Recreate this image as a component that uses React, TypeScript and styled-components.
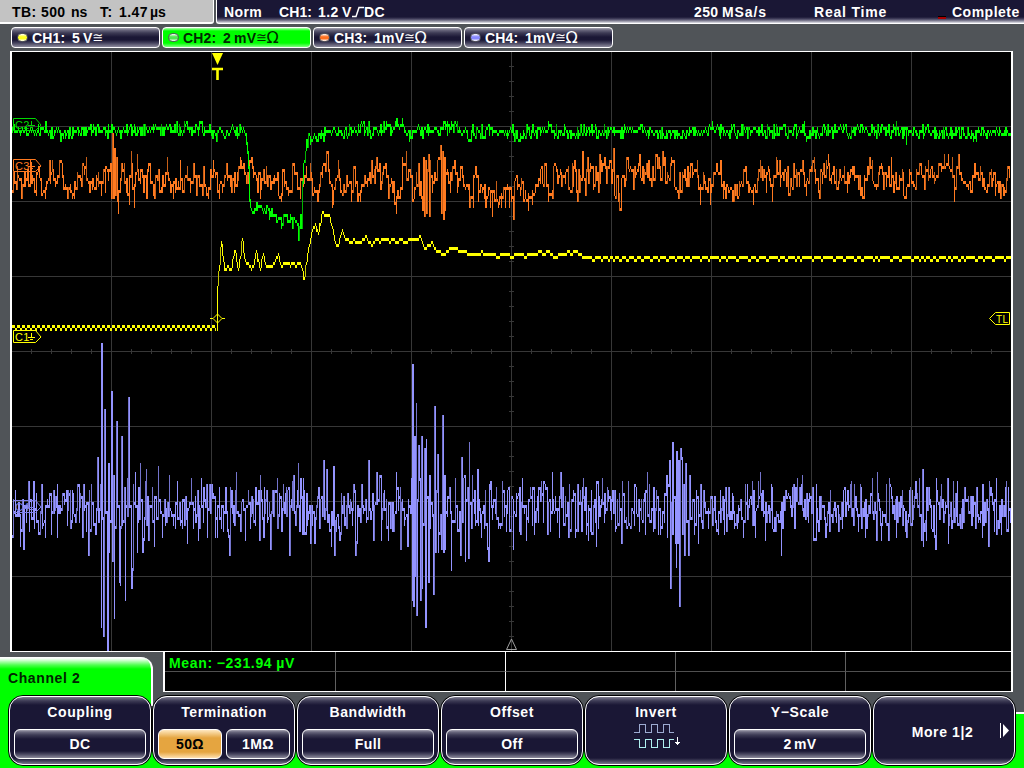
import { Fragment } from 'react';
import styled, { createGlobalStyle, css } from 'styled-components';

const GlobalStyle = createGlobalStyle`
  * {
    box-sizing: border-box;
  }

  body {
    margin: 0;
    background: #505458;
    font-family: 'Liberation Sans', Arial, sans-serif;
    font-size: 14px;
    font-weight: 700;
    color: #fff;
    overflow: hidden;
  }
`;

const navy = '#1a1735';

const glossy = css`
  background: linear-gradient(
    to bottom,
    #a8a6b4 0,
    #6a687e 2px,
    #3c3a54 5px,
    ${navy} 9px,
    ${navy} calc(100% - 7px),
    #45435d calc(100% - 4px),
    #8d8b9d 100%
  );
`;

const Page = styled.div`
  display: flex;
  flex-direction: column;
  width: 1024px;
  height: 768px;
  background: #505458;
`;

const TopBar = styled.header`
  display: flex;
  gap: 2px;
  height: 24px;
`;

const TimeBase = styled.div`
  display: flex;
  align-items: center;
  width: 214px;
  padding-left: 12px;
  color: #000;
  background: #c3c3c3;
  border-right: 1px solid #fff;
  border-bottom: 2px solid #fff;
  border-bottom-right-radius: 3px;
  padding-top: 2px;
`;

const Status = styled.div`
  display: flex;
  align-items: center;
  flex: 1;
  padding-left: 7px;
  border-left: 1px solid #fff;
  border-bottom: 1px solid #fff;
  border-bottom-left-radius: 3px;
  background: linear-gradient(${navy} 17px, #45425f 19px, #8b899c 21px, #e4e4ea 23px);
  padding-top: 1px;
`;

const Token = styled.span<{ $w?: number; $ls?: number }>`
  flex: none;
  width: ${({ $w }) => ($w ? `${$w}px` : 'auto')};
  letter-spacing: ${({ $ls = 0.4 }) => $ls}px;
  white-space: nowrap;
`;

const Busy = styled.i`
  width: 8px;
  height: 3px;
  margin: 11px 6px 0 0;
  border-bottom: 2px solid #a80000;
  background: #000;
`;

const Channels = styled.div`
  display: flex;
  gap: 2px;
  height: 27px;
  padding: 3px 0 0 11px;
`;

const ChannelTab = styled.div<{ $active?: boolean }>`
  display: flex;
  align-items: center;
  width: 149px;
  height: 21px;
  padding-left: 5px;
  border: 1px solid #fff;
  border-radius: 4px;
  ${glossy}
  ${({ $active }) =>
    $active &&
    css`
      color: #002800;
      background: linear-gradient(#b0ffb0 0, #0f0 3px, #0f0 15px, #80ff80 19px);
    `}
`;

const Led = styled.i<{ $color: string }>`
  width: 11px;
  height: 9px;
  margin-right: 4px;
  border: 1px solid #55555c;
  border-radius: 5px;
  background: linear-gradient(#fff, ${({ $color }) => $color} 40%, ${({ $color }) => $color} 65%, #fff);
`;

const Coupling = styled.span<{ $size: number }>`
  font-family: 'DejaVu Sans', sans-serif;
  font-size: ${({ $size }) => $size}px;
  line-height: 16px;
  font-weight: 400;
  letter-spacing: -0.7px;
`;

const Screen = styled.main`
  width: 1003px;
  height: 601px;
  margin-left: 10px;
  border: solid #fff;
  border-width: 1px 2px;
  background: #000;

  svg {
    display: block;
  }
`;

const Lower = styled.div`
  display: flex;
  height: 40px;
`;

const MenuTab = styled.div`
  display: flex;
  align-items: center;
  width: 153px;
  height: 35px;
  margin: 5px 10px 0 0;
  padding: 7px 0 0 8px;
  color: #002400;
  background: linear-gradient(#fff 1px, #d8ffd8 3px, #50ff50 8px, #0f0 12px);
  border-right: 2px solid #fff;
  border-top-right-radius: 12px;
`;

const Measurements = styled.div`
  display: grid;
  grid-template-columns: 171px 170px 170px 170px 1fr;
  grid-template-rows: 20px 19px;
  width: 850px;
  height: 40px;
  border: solid #fff;
  border-width: 0 2px 1px;
  background: #000;
`;

const Cell = styled.div<{ $bright?: boolean; $top?: boolean; $last?: boolean }>`
  padding-left: 4px;
  line-height: 22px;
  color: #0f0;
  white-space: pre;
  letter-spacing: 0.65px;
  word-spacing: -0.5px;
  border-right: ${({ $bright, $last }) =>
    $last ? 'none' : `1px solid ${$bright ? '#fff' : '#606060'}`};
  border-bottom: ${({ $top }) => ($top ? '1px solid #505050' : 'none')};
`;

const Menu = styled.nav`
  display: flex;
  height: 76px;
  padding: 3px 8px 0;
  background:
    linear-gradient(#fff, #fff) 151px 0 / 2px 14px no-repeat,
    linear-gradient(#0f0, #0f0) 0 0 / 151px 100% no-repeat,
    linear-gradient(#505458, #505458) 153px 0 / 850px 50px no-repeat,
    linear-gradient(transparent 20px, #fff 20px, #fff 22px, #0f0 22px);
`;

const MenuButton = styled.div<{ $center?: boolean }>`
  position: relative;
  display: flex;
  flex-direction: column;
  justify-content: ${({ $center }) => ($center ? 'center' : 'flex-start')};
  width: 144px;
  height: 71px;
  padding: ${({ $center }) => ($center ? '2px 0 0' : '7px 4px 0')};
  border: 1px solid #000;
  border-radius: 15px;
  text-align: center;
  ${glossy}

  &::before {
    content: '';
    position: absolute;
    inset: 0;
    border: 1px solid #fff;
    border-radius: 14px;
  }
`;

const Title = styled.div`
  height: 26px;
  line-height: 18px;
  letter-spacing: 0.6px;
`;

const Values = styled.div`
  display: flex;
  gap: 4px;
  padding: 0 1px;
`;

const Value = styled.div<{ $selected?: boolean }>`
  flex: 1;
  height: 30px;
  line-height: 28px;
  border: 1px solid #fff;
  border-radius: 6px;
  letter-spacing: 0.4px;
  word-spacing: -2px;
  ${glossy}
  ${({ $selected }) =>
    $selected &&
    css`
      color: #000;
      background: linear-gradient(#ffe8c0 0, #e5a540 8px, #e5a540 22px, #ffe0b0 100%);
    `}
`;

const More = styled.div`
  padding-right: 3px;
  letter-spacing: 0.6px;
`;

const MoreArrow = styled.svg`
  position: absolute;
  right: 5px;
  top: 26px;
`;

const Icon = styled.svg`
  display: block;
  margin: -6px 0 0 45px;
`;

type Point = [number, number];

const pts = (source: string): Point[] =>
  source
    .trim()
    .split(/\s+/)
    .map((pair) => pair.split(',').map(Number) as Point);

const random = (seed: number) => () => {
  seed = (seed * 1664525 + 1013904223) >>> 0;
  return seed / 4294967296;
};

// noise samples over an interval of the trace
const noise = (from: number, to: number, centre: number, amp: number, step: number, seed: number) => {
  const rnd = random(seed);
  const result: Point[] = [];
  let slow = 0;
  for (let x = from; x < to; x += step * (0.7 + rnd() * 0.6)) {
    const v = rnd() + rnd() + rnd() - 1.5;
    slow = slow * 0.8 + v * 0.3;
    result.push([x, centre + (v * 0.9 + slow * 0.4) * amp]);
  }
  return result;
};

// keep the peaks and put noise samples between them; pull = 0 follows the peaks, 1 the centre
const fill = (keys: Point[], centre: number, pull: number, amp: number, step: number, seed: number) => {
  const rnd = random(seed);
  const result: Point[] = [];
  keys.forEach(([x0, y0], i) => {
    result.push([x0, y0]);
    const next = keys[i + 1];
    if (!next) return;
    for (let x = x0 + step; x < next[0] - step * 0.5; x += step) {
      const line = y0 + ((next[1] - y0) * (x - x0)) / (next[0] - x0);
      const v = rnd() + rnd() - 1;
      result.push([x, line * (1 - pull) + centre * pull + v * amp]);
    }
  });
  return result;
};

const level = (y: number) => Math.round((y - 1) / 3) * 3 + 1;

// one vertical run per pixel column, 3px vertical resolution
const columns = (points: Point[], smooth: boolean) => {
  let bright = '';
  let dim = '';
  let i = 0;
  let last = level(points[0][1]);
  const from = Math.floor(points[0][0]);
  const to = Math.min(1011, Math.ceil(points[points.length - 1][0]) + 1);
  for (let x = from; x < to; x += 1) {
    const samples: number[] = [];
    while (i < points.length && points[i][0] < x + 1) {
      samples.push(level(points[i][1]));
      i += 1;
    }
    if (!samples.length && smooth && i > 0 && i < points.length) {
      const [x0, y0] = points[i - 1];
      const [x1, y1] = points[i];
      samples.push(level(y0 + ((y1 - y0) * (x + 0.5 - x0)) / (x1 - x0)));
    }
    if (!samples.length) samples.push(last);
    let top = Math.min(...samples);
    let bottom = Math.max(...samples);
    const overlap = smooth ? 3 : 0;
    if (last < top - 3) top = last + overlap;
    if (last > bottom + 3) bottom = last - overlap;
    const rising = samples[0] < last;
    last = samples[samples.length - 1];
    const run = `M${x + 0.5} ${Math.max(52, top)}V${Math.min(651, bottom + 3)}`;
    if (bottom - top > 8 && rising && x % 3) dim += run;
    else bright += run;
  }
  return { bright, dim };
};

const green = [
  ...fill(pts('12,130 44,130 45,120 46,131 71,137 72,130 201,122 202,130 216,140 217,129 243,128'), 130, 0.7, 7, 0.9, 12),
  ...pts('244,129 245,133 246,142 247,150 248,165 249,200'),
  ...fill(pts('250,205 254,211 260,205 268,209 269,217 270,212 275,213 281,226 283,216 290,219 297,222'), 215, 0, 7.5, 0.95, 5),
  ...pts('298,237 299,225 300,214 301,225 302,180 303,162 304,160 305,150'),
  ...fill(pts('306,149 310,142 316,140 320,133 325,134 330,131 341,134 368,122 369,130 402,119 404,130 409,138 412,130 457,122 459,131 470,140 471,130'), 130, 0.5, 7.5, 0.9, 6),
  ...fill(pts('472,131 520,138 548,122 560,130 700,132 712,122 750,130 804,122 806,140 809,130 896,122 906,141 908,130 976,140 978,131 1011,131'), 130.5, 0.8, 7.5, 0.9, 8),
];

const orange = [
  ...fill(
    pts(`12,189 13,180 16,187 17,166 21,192 24,173 25,183 30,160 36,192 38,170 43,189 45,195 48,177 49,160
    50,180 52,160 55,183 59,170 62,163 65,183 67,195 70,183 72,195 74,195 77,173 80,176 84,172 86,157 88,181
    92,186 96,176 98,173 101,192 103,176 105,189 107,170 108,178 110,163 111,195 112,133 113,195 114,148
    115,192 116,157 117,198 118,210 120,178 124,164 126,189 129,201 131,151 134,204 137,154 140,182 142,170
    146,195 147,172 150,175 153,192 157,175 161,186 165,175 167,157 170,180 173,195 175,189 178,180 180,160
    182,184 184,183 187,166 190,189 193,171 196,184 199,184 202,192 203,166 206,188 208,195 210,177 213,160
    215,175 217,183 219,196 222,189 226,172 230,183 234,189 237,173 240,157 243,165 246,175 251,160 256,175
    260,195 263,172 266,165 270,182 273,178 277,173 278,183 281,198 284,178 288,193 292,175 296,172 297,186
    300,195 302,177 304,180 306,165 309,178 310,163 314,187 317,198 322,175 325,163 328,163 331,185 332,204
    337,175 338,160 342,192 346,175 351,198 353,176 355,176 360,198 364,175 367,183 369,177 374,170 379,163
    380,187 385,167 388,189 391,178 396,210 400,195 402,157 404,162 406,151 408,178 410,175 412,186 414,196
    416,171 418,164 419,192 420,180 421,195 422,207 423,157 424,213 425,160 426,210 427,170 428,154 429,213
    430,160 432,191 434,180 437,166 440,145 441,210 442,150 443,216 444,158 445,207 447,170 450,190 454,160
    457,190 460,178 462,167 465,188 468,187 473,204 475,172 478,198 482,189 484,195 488,192 490,205 492,213
    496,181 498,205 501,204 505,205 507,185 509,204 511,198 513,216 514,180 520,192 525,189 528,207 532,201
    535,190 540,181 546,172 548,198 552,190 556,166 560,170 565,180 568,165 570,190`),
    178, 0.25, 16, 0.95, 31,
  ),
  ...noise(572, 600, 173, 21, 1.05, 15),
  ...noise(600, 690, 176, 24, 1.05, 16),
  ...fill(
    pts(`690,176 692,163 697,160 700,201 703,172 707,188 710,201 713,173 716,170 720,160 721,178 723,195 728,189
    732,198 739,193 745,170 748,190 753,201 757,177 760,160 766,190 768,166 772,198 776,157 779,160 780,183
    786,173 790,184 796,170 799,184 802,160 806,192 811,166 814,157 818,189 822,180 826,160 828,154 831,180
    836,168 838,182 844,167 847,189 852,166 858,187 864,189 867,170 872,160 876,185 881,163 886,185 891,157
    893,190 899,187 902,170 906,188 909,170 913,185 919,166 924,184 928,160 934,172 938,170 944,154 948,154
    952,157 954,198 958,160 963,180 968,187 974,176 980,166 986,189 991,170 995,192 1003,190 1009,176`),
    177, 0.35, 15, 0.95, 32,
  ),
];

const square: Point[] = [];
for (let x = 12; x < 216; x += 5) {
  square.push([x, 325], [x + 3, 328]);
}

const tail: Point[] = [];
const tailRandom = random(41);
for (let x = 588; x < 1009; ) {
  const high = 3 + Math.floor(tailRandom() * (x < 690 ? 4 : 8));
  tail.push([x, 256], [x + high, 259]);
  x += high + 2 + Math.floor(tailRandom() * 2);
}
tail.push([1010, 256]);

const edge = pts(`217,328 217.3,285 218,271 219,266 221,241 223,258 224,268 228,266 231,269 233,255 235,250
  238,268 240,255 242,238 245,260 248,262 251,267 253,265 256,250 258,260 260,267 263,253 265,262 268,265
  272,266 274,262 278,254 281,265 284,262 288,261 290,264 293,261 296,264 300,261 302,268 304,278 306,262
  309,245 312,230 315,224 318,231 320,222 322,212 329,214 332,226 335,240 338,245 342,230 346,238 348,237
  350,242 354,239 357,242 360,241 366,236 370,242 372,244 376,238 380,240 385,237 390,240 394,238 397,241
  401,238 405,241 410,238 414,238 420,236 425,247 432,242 438,251 445,252 450,247 456,246 460,250 465,249
  470,254 473,252 477,253 482,251 488,253 493,252 498,256 503,252 507,253 513,256 514,252 520,252 526,256
  529,252 535,253 540,250 544,253 548,249 551,253 556,256 559,253 565,253 568,250 572,253 575,249 580,253
  584,256 587,256`);

const violet = [
  ...fill(
    pts(`12,534 13,500 15,490 17,510 20,543 22,500 23,547 24,510 26,520 28,481 29,529 31,500 33,481
    34,525 36,492 38,520 40,510 41,484 42,525 45,535 47,500 49,505 51,532 54,510 57,484 57,535 60,505 66,490
    67,522 70,490 73,492 77,493 79,520 82,535 83,487 86,530 88,552 89,490 91,484 93,515 95,532 96,510 97.5,457
    98.5,520 100,484 101,625 101.5,343 103,634 104,409 105,495 107,651 108,463 109,550 111,391 112,559 113,475
    114,616 116,421 117,495 119,580 120,583 121.5,436 123,520 124,487 125,598 127,478 127.8,515 128.5,397 129,478
    131,586 132,568 133,484 135,472 137,550 140,463 142,549 143,549 146,469 148.5,538 150,505 152,487 154,543
    156,510 158,466 160,500 162,535 164,500 165,522 169,475 171,510 173,524 175,525 177,481 179,510 182,525 184,498
    187,541 189,505 191,478 193,525 195,495 198,538 201,478 203,520 206,484 207,535 209,500 213,493 215,535
    217,535 219,487 221,525 223,528 225,500 229,552 230,487 233,520 236,472 238,510 240,524 243,500 245,538
    248,490 250,525 253,500 255,522 258,490 259,538`),
    508, 0.8, 28, 0.85, 51,
  ),
  ...noise(260, 380, 509, 37, 0.85, 21),
  ...fill(
    pts(`381,538 384,490 386,500 388,538 391,502 392,528 396,472 398,508 400,487 400.5,546 402,500
    404,522 407,543 408,499 410,510 411,478 412,598 412.5,364 413,604 414,436 415,574 416,403 416.5,613 418,445
    419,478 420,598 421,436 422,586 424,448 425,625 426,439 428,580 429,475 430,525 432,514 433,592 434,406
    435,550 436,490 437,454 438,550 440,514 441,547 442,415 443,550 444,475 445,546 447,515 449,487 450,510
    451,568 453,520 455,478 457,518 459,510 460,552 461,457 462,520 463,478 464,475 465,559 467,487 468,556
    469,442 471,525 472,475 474,510 477,469 478,522 481,534 485,490 487,547 488,559 489,484 492,517 496,487
    498,525 500,525 502,481 504,515 506,529 509,505 511,520 513,547 512,499 516,495 519,528 522,478 524,510
    526,538 528,520 530,487 532,524 534,531 537,495 538,520 541,481 543,519 545,484 547,519 550,528 552,472
    555,495 557,520 559,535 560.5,472 563,515 565,495 568,535 569,484 571,510 573,490 575,535 577,484 578,528
    580,490 583,478 586,532 588,538 591,490 593,510 596,543 596,481 598,525 602,478 604,520 608,490 611,518
    615,530 617,500 619,493 621,541 622,481 624,520 626,518 628,481 630,525 634,522 636,487 639,528 641,500
    645,532 647,472 649,484 651,510 653,530 656,490 658,532 660,532 662,525 664,520 666,475 667,535 669,460
    670,586 671,502 672,532 672.5,442 673,532 675,541 676,564 676.5,451 677,540 678,460 679,604 680,448 681,457
    682,532 683,484 684,552 685,463 686,510 688,552 689,475 690,493 692,510 694,532 696,490 698,541 700,484
    708,525 718,532 720,490 724,532 733,496 737,525 743,534 745,484 747,484 752,481 755,534 758,481 760,472
    765,537 771,484 775,530 781,552 786,490 792,487 797,478 802,475 808,520 815,537 816,484 826,534 830,490
    836,520 842,525 851,481 854,484 858,528 861,487 865,534 872,478 876,537 877,472 881,537 888,538 889,478
    891,487 896,534 902,490 905,528 912,490 919,478 921,538 922,469 923,543 926,537 930,500 935,546 936,478
    941,484 947,478 948,540 953,481 957,481 962,527 968,495 975,520 982,534 988,543 989,481 996,478 1001,531
    1008,487 1010,520`),
    508, 0.9, 30, 0.85, 52,
  ),
];

type TraceProps = { points: Point[]; color: string; dim: string; smooth?: boolean };

const Trace = ({ points, color, dim, smooth = false }: TraceProps) => {
  const path = columns(points, smooth);
  return (
    <>
      <path d={path.bright} stroke={color} />
      <path d={path.dim} stroke={dim} />
    </>
  );
};

const FlagText = styled.text<{ $small?: boolean }>`
  font-size: ${({ $small }) => ($small ? 10 : 11)}px;
  font-weight: 400;
  letter-spacing: 0.4px;
`;

const Flag = ({ y, label, color }: { y: number; label: string; color: string }) => (
  <g stroke={color} fill='none'>
    <path d={`M13.5 ${y - 6.5}H35.5L41 ${y}L35.5 ${y + 5.5}H13.5Z`} />
    <FlagText x={15} y={y + 3.5} fill={color} stroke='none'>
      {label}
    </FlagText>
    <path d={`M31.5 ${y - 4}V${y + 1}M28 ${y + 0.5}H35M30 ${y + 2.5}H33`} />
  </g>
);

const verticals = [111, 211, 311, 411, 511, 611, 711, 811, 911];
const horizontals = [126, 201, 276, 351, 426, 501, 576];

const Graticule = () => {
  let ticks = '';
  for (let x = 31; x < 1011; x += 20) ticks += `M${x + 0.5} 349V354`;
  for (let y = 66; y < 651; y += 15) ticks += `M509 ${y + 0.5}H514`;
  return (
    <path
      stroke='#373737'
      d={
        verticals.map((x) => `M${x + 0.5} 52V651`).join('') +
        horizontals.map((y) => `M12 ${y + 0.5}H1011`).join('') +
        ticks
      }
    />
  );
};

const channels = [
  { name: 'CH1:', value: '5', unit: 'V', color: '#ffff20' },
  { name: 'CH2:', value: '2', unit: 'mV', ohm: true, color: '#50e850', active: true },
  { name: 'CH3:', value: '1', unit: 'mV', ohm: true, color: '#ff7020' },
  { name: 'CH4:', value: '1', unit: 'mV', ohm: true, color: '#8888ff' },
];

const menu = [
  { title: 'Coupling', values: ['DC'] },
  { title: 'Termination', values: ['50Ω', '1MΩ'], selected: 0 },
  { title: 'Bandwidth', values: ['Full'] },
  { title: 'Offset', values: ['Off'] },
  { title: 'Invert', values: [] },
  { title: 'Y−Scale', values: ['2 mV'] },
];

const InvertIcon = () => (
  <Icon width='48' height='30' fill='none' shapeRendering='crispEdges'>
    <path stroke='#9dabd2' d='M0 9.5H5.5V1.5H11.5V9.5H17.5V1.5H23.5V9.5H29.5V1.5H35.5V9.5H40' />
    <path stroke='#b0f0f0' d='M0 16.5H5.5V24.5H11.5V16.5H17.5V24.5H23.5V16.5H29.5V24.5H35.5V16.5H40' />
    <path stroke='#fff' d='M43.5 14V22M41 19.5H46M42 20.5H45' />
  </Icon>
);

export default function App() {
  return (
    <Page>
      <GlobalStyle />
      <TopBar>
        <TimeBase>
          <Token $w={29}>TB:</Token>
          <Token $w={30}>500</Token>
          <Token $w={29} $ls={0}>ns</Token>
          <Token $w={19}>T:</Token>
          <Token $w={31}>1.47</Token>
          <Token $ls={0}>µs</Token>
        </TimeBase>
        <Status>
          <Token $w={55}>Norm</Token>
          <Token $w={39} $ls={0.1}>CH1:</Token>
          <Token $w={24}>1.2</Token>
          <Token $w={10}>V</Token>
          <svg width='12' height='12' fill='none' stroke='#fff' strokeWidth='1.5'>
            <path d='M0 10.5H4L7 1.5H12' />
          </svg>
          <Token $w={330}>DC</Token>
          <Token $w={28}>250</Token>
          <Token $w={92} $ls={0.9}>MSa/s</Token>
          <Token $w={124} $ls={0.8}>Real Time</Token>
          <Busy />
          <Token $ls={0.5}>Complete</Token>
        </Status>
      </TopBar>

      <Channels>
        {channels.map((ch) => (
          <ChannelTab key={ch.name} $active={ch.active}>
            <Led $color={ch.color} />
            <Token $w={40} $ls={0.2}>{ch.name}</Token>
            <Token $w={ch.value === '1' ? 8 : 11} $ls={0}>{ch.value}</Token>
            <Token $ls={0.2}>{ch.unit}</Token>
            <Coupling $size={13}>≅</Coupling>
            {ch.ohm && <Coupling $size={16}>Ω</Coupling>}
          </ChannelTab>
        ))}
      </Channels>

      <Screen>
        <svg width='999' height='599' viewBox='12 52 999 599'>
          <g shapeRendering='crispEdges'>
            <Graticule />
            <Trace points={violet} color='#9494ff' dim='#7474cc' />
            <Trace points={square} color='#ffff00' dim='#c8c800' />
            <Trace points={edge} color='#ffff00' dim='#c8c800' smooth />
            <Trace points={tail} color='#ffff00' dim='#c8c800' />
            <Trace points={orange} color='#ff7a20' dim='#c86018' />
            <Trace points={green} color='#00ff00' dim='#00b400' />
          </g>
          <Flag y={125} label='C2' color='#00d800' />
          <Flag y={166} label='C3' color='#ff7a20' />
          <Flag y={337} label='C1' color='#ffff00' />
          <Flag y={507} label='C4' color='#8080e8' />
          <path d='M212 53H223L217.5 65Z' fill='#ffff00' />
          <path d='M212 69H223M217.5 68V80' stroke='#ffff00' strokeWidth='2.6' />
          <path
            d='M217.5 314L222 318.5L217.5 323L213 318.5ZM210 318.5H213M222 318.5H225'
            fill='none'
            stroke='#ffff00'
          />
          <path d='M995.5 312.5H1009.5V324.5H995.5L989.5 318.5Z' fill='none' stroke='#ffff00' />
          <FlagText $small x={996} y={322.5} fill='#ffff00'>
            TL
          </FlagText>
          <path d='M511.5 639L506.5 649.5H516.5Z' fill='none' stroke='#a0a0a0' />
        </svg>
      </Screen>

      <Lower>
        <MenuTab>
          <Token $ls={0.6}>Channel 2</Token>
        </MenuTab>
        <Measurements>
          {[true, false].map((top) => (
            <Fragment key={String(top)}>
              {[0, 1, 2, 3, 4].map((n) => (
                <Cell key={n} $top={top} $bright={n === 1} $last={n === 4}>
                  {top && n === 0 ? 'Mean: −231.94 µV' : ''}
                </Cell>
              ))}
            </Fragment>
          ))}
        </Measurements>
      </Lower>

      <Menu>
        {menu.map((item) => (
          <MenuButton key={item.title}>
            <Title>{item.title}</Title>
            {item.values.length ? (
              <Values>
                {item.values.map((value, n) => (
                  <Value key={value} $selected={item.selected === n}>
                    {value}
                  </Value>
                ))}
              </Values>
            ) : (
              <InvertIcon />
            )}
          </MenuButton>
        ))}
        <MenuButton $center>
          <More>More 1|2</More>
          <MoreArrow width='11' height='17'>
            <path d='M1.5 1V16' stroke='#fff' />
            <path d='M4 2V15L10 8.5Z' fill='#fff' />
          </MoreArrow>
        </MenuButton>
      </Menu>
    </Page>
  );
}
